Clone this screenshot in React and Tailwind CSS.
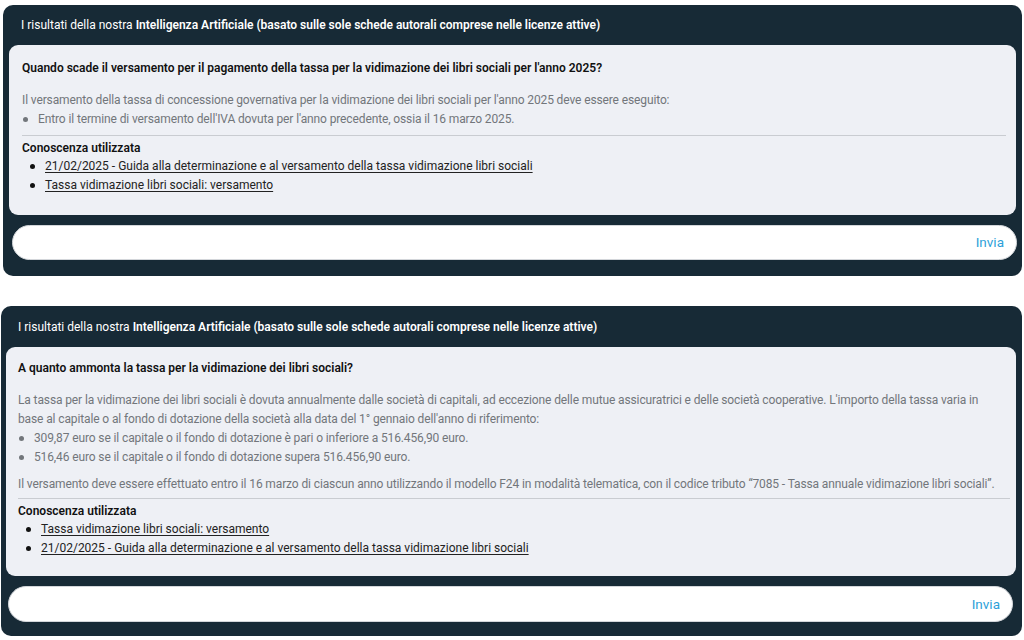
import React, { useState } from "react";

const font = { fontFamily: "Roboto, 'Noto Sans', sans-serif" };

const answers = [
  {
    question:
      "Quando scade il versamento per il pagamento della tassa per la vidimazione dei libri sociali per l'anno 2025?",
    body: [
      {
        text: "Il versamento della tassa di concessione governativa per la vidimazione dei libri sociali per l'anno 2025 deve essere eseguito:",
        bullets: [
          "Entro il termine di versamento dell'IVA dovuta per l'anno precedente, ossia il 16 marzo 2025.",
        ],
      },
    ],
    links: [
      "21/02/2025 - Guida alla determinazione e al versamento della tassa vidimazione libri sociali",
      "Tassa vidimazione libri sociali: versamento",
    ],
  },
  {
    question: "A quanto ammonta la tassa per la vidimazione dei libri sociali?",
    body: [
      {
        text: "La tassa per la vidimazione dei libri sociali è dovuta annualmente dalle società di capitali, ad eccezione delle mutue assicuratrici e delle società cooperative. L'importo della tassa varia in base al capitale o al fondo di dotazione della società alla data del 1° gennaio dell'anno di riferimento:",
        narrow: true,
        bullets: [
          "309,87 euro se il capitale o il fondo di dotazione è pari o inferiore a 516.456,90 euro.",
          "516,46 euro se il capitale o il fondo di dotazione supera 516.456,90 euro.",
        ],
      },
      {
        text: "Il versamento deve essere effettuato entro il 16 marzo di ciascun anno utilizzando il modello F24 in modalità telematica, con il codice tributo “7085 - Tassa annuale vidimazione libri sociali”.",
        bullets: [],
      },
    ],
    links: [
      "Tassa vidimazione libri sociali: versamento",
      "21/02/2025 - Guida alla determinazione e al versamento della tassa vidimazione libri sociali",
    ],
  },
];

const Panel = ({ data, frameClass, headerClass, cardClass, dividerClass, inputClass }) => {
  const [value, setValue] = useState("");

  return (
    <div className={`rounded-[10px] bg-[#172a36] ${frameClass}`}>
      <div className={`flex items-center text-[12px] text-white ${headerClass}`}>
        <span>
          I risultati della nostra{" "}
          <b className="font-semibold">
            Intelligenza Artificiale (basato sulle sole schede autorali comprese nelle licenze attive)
          </b>
        </span>
      </div>

      <div className={`rounded-[9px] bg-[#eef0f5] ${cardClass}`}>
        <div className="text-[12px] font-semibold leading-[19px] text-[#111]">{data.question}</div>

        <div className="mt-[13px] text-[12px] leading-[19px] tracking-[-0.12px] text-[#72767b]">
          {data.body.map((p, i) => (
            <div key={i} className={i > 0 ? "mt-[8px]" : ""}>
              <p className={p.narrow ? "max-w-[972px]" : ""}>{p.text}</p>
              {p.bullets.map((b) => (
                <div key={b} className="flex items-center">
                  <span className="ml-[1px] mr-[10px] h-[5px] w-[5px] rounded-full bg-[#72767b]" />
                  <span>{b}</span>
                </div>
              ))}
            </div>
          ))}
        </div>

        <div className={`border-t border-[#c9ccd1] ${dividerClass}`} />

        <div className="mt-[3px] text-[12px] font-semibold leading-[18px] text-[#111]">
          Conoscenza utilizzata
        </div>
        <ul className="text-[12px] leading-[19px] text-[#222]">
          {data.links.map((l) => (
            <li key={l} className="flex items-center pl-[8px]">
              <span className="mr-[10px] h-[5px] w-[5px] rounded-full bg-[#111]" />
              <a href="#" className="underline underline-offset-2">
                {l}
              </a>
            </li>
          ))}
        </ul>
      </div>

      <div
        className={`flex items-center rounded-full border border-[#d3d6da] bg-white pr-[12px] ${inputClass}`}
      >
        <input
          className="h-full flex-1 rounded-full bg-transparent px-4 text-[13px] outline-none"
          value={value}
          onChange={(e) => setValue(e.target.value)}
        />
        <button className="text-[13.5px] text-[#2d9fd9]">Invia</button>
      </div>
    </div>
  );
};

export default function App() {
  return (
    <div className="min-h-screen bg-white pt-[5px]" style={font}>
      <Panel
        data={answers[0]}
        frameClass="ml-[3px] mr-[2px] pb-[16px]"
        headerClass="h-[40px] pl-[18px]"
        cardClass="mx-[6px] pl-[13px] pr-[10px] pt-[14px] pb-[20px]"
        dividerClass="mt-[6px]"
        inputClass="ml-[9px] mr-[5px] mt-[10px] h-[35px]"
      />
      <div className="h-[30px]" />
      <Panel
        data={answers[1]}
        frameClass="ml-[1px] mr-[2px] pb-[14px]"
        headerClass="h-[41px] pl-[17px]"
        cardClass="ml-[5px] mr-[6px] pl-[12px] pr-[6px] pt-[12px] pb-[18px]"
        dividerClass="mt-[4px]"
        inputClass="ml-[7px] mr-[9px] mt-[10px] h-[36px]"
      />
    </div>
  );
}
